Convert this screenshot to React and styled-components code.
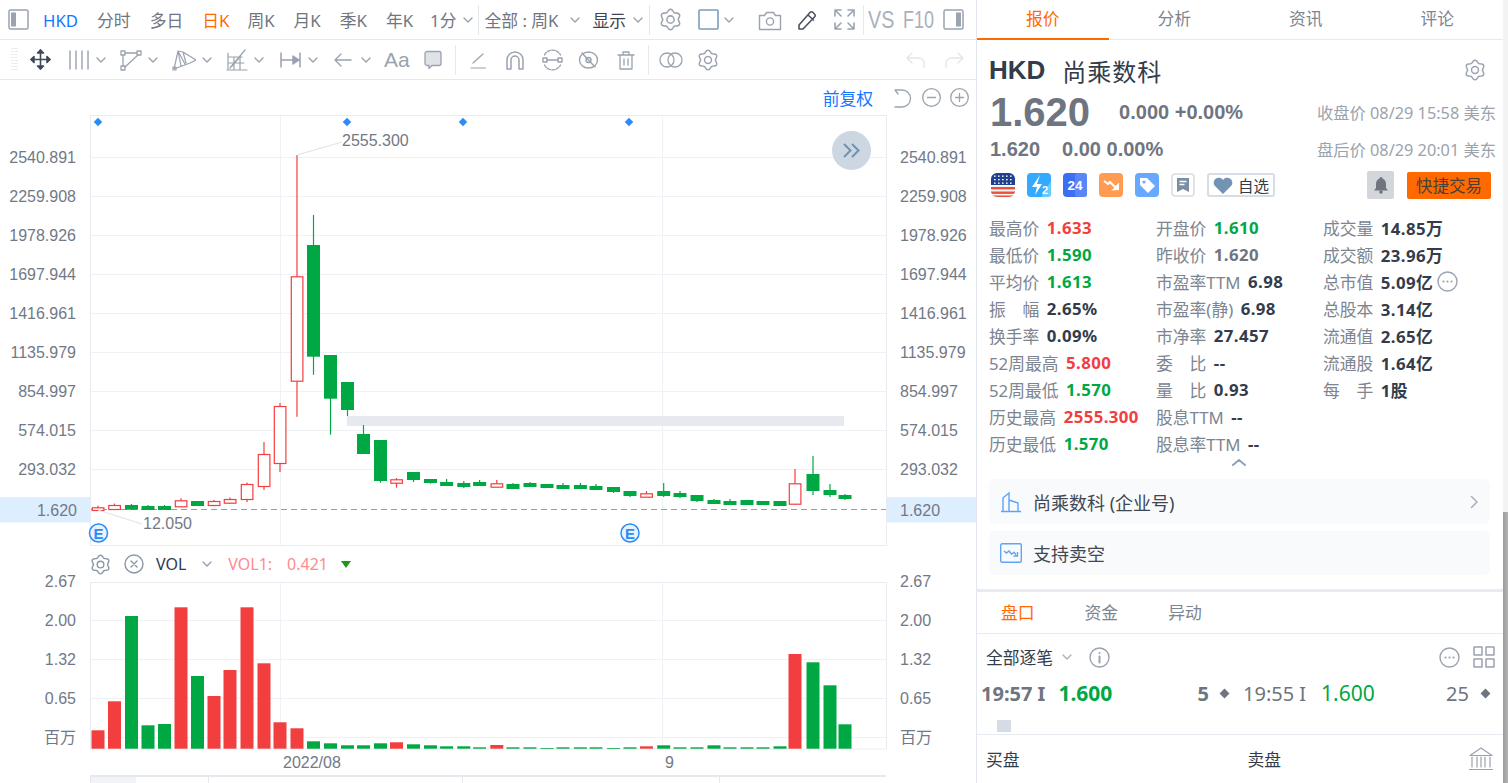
import React from "react";
import styled, { createGlobalStyle } from "styled-components";

const Global = createGlobalStyle`
  html, body { margin: 0; padding: 0; height: 783px; overflow: hidden; background: #fff; }
  body { font-family: "Noto Sans", "Noto Sans CJK SC", sans-serif; }
  * { box-sizing: border-box; }
`;

const ICON = "#9aa3af";
const GREEN = "#00a843";
const RED = "#f23e3e";
const TXT = "#333c4a";
const NUM = '"Liberation Sans", "Noto Sans CJK SC", sans-serif';

const Page = styled.div`display: flex; width: 1508px; height: 783px; overflow: hidden;`;
const Left = styled.div`width: 977px; height: 783px; border-right: 1px solid #e3e8f0; display: flex; flex-direction: column; flex: none; overflow: hidden;`;
const Right = styled.div`width: 526px; height: 783px; display: flex; flex-direction: column; flex: none; overflow: hidden;`;
const Scroll = styled.div`width: 5px; height: 783px; flex: none; background: #f3f3f3; display: flex; flex-direction: column; justify-content: flex-end;`;
const Thumb = styled.div`height: 271px; background: linear-gradient(90deg, #9c9c9c, #b4b4b4);`;

const Bar = styled.div`height: ${p => p.$h}px; display: flex; align-items: center; border-bottom: 1px solid #e4e8ef; flex: none; color: ${ICON};`;
const Item = styled.span`display: inline-flex; align-items: center; justify-content: center; flex: none; margin-left: ${p => p.$ml || 0}px; ${p => p.$w ? `width:${p.$w}px;` : ""} color: ${p => p.$c || "inherit"};`;
const Top = styled.span`flex: none; font-size: 16.8px; white-space: nowrap; margin-left: ${p => p.$ml || 0}px; padding-top: 2px; color: ${p => p.$c || "#6f7680"}; line-height: 22px;`;
const Sep = styled.span`flex: none; width: 1px; height: 30px; background: #e4e8ef; margin-left: ${p => p.$ml || 0}px;`;
const Faint = styled.span`flex: none; display: block; width: 7px; height: 24px; margin-left: ${p => p.$ml || 0}px; background: repeating-linear-gradient(180deg, #e9ecf1 0 1px, #fff 1px 3px);`;
const AaText = styled.span`flex: none; font-family: ${NUM}; font-size: 21px; color: ${ICON}; margin-left: ${p => p.$ml}px; width: 23px;`;
const Condensed = styled.span`flex: none; font-family: ${NUM}; font-size: 24px; color: #a9b1bc; display: inline-block; width: ${p => p.$w}px; margin-left: ${p => p.$ml}px; transform: scaleX(${p => p.$s}); transform-origin: left center; white-space: nowrap;`;
const Spacer = styled.span`flex: 1;`;

const ChartHead = styled.div`height: 35px; flex: none; display: flex; align-items: center; justify-content: flex-end; padding-right: 7px; color: ${ICON};`;
const Blue = styled.span`font-size: 16.8px; color: #1677ff; margin-right: 21px;`;
const Chart = styled.svg`display: block; flex: none;`;
const VolHead = styled.div`height: 26px; padding-top: 10px; flex: none; display: flex; align-items: center; padding-left: 90px; color: ${ICON};`;
const VolName = styled.span`font-size: 16px; color: ${p => p.$c}; margin-left: ${p => p.$ml}px; white-space: nowrap;`;
const Nav = styled.div`flex: 1; margin-left: 90px; width: 796px; border-top: 2px solid #e4e8ef; border-left: 1px solid #e4e8ef; display: flex;`;
const NavHandle = styled.div`height: 100%; width: ${p => p.$w}px; background: ${p => p.$bg || "transparent"}; border-right: ${p => p.$line ? "1px solid #e4e8ef" : "0"}; flex: none;`;

const Tabs = styled.div`height: 40px; flex: none; display: flex; border-bottom: 1px solid #e6eaf0;`;
const Tab = styled.div`width: 131.5px; height: 40px; display: flex; align-items: center; justify-content: center; font-size: 16.8px; padding-bottom: 2px; color: ${p => p.$on ? "#ff6a00" : "#7d8590"}; border-bottom: 2px solid ${p => p.$on ? "#ff6a00" : "transparent"};`;
const NameRow = styled.div`height: 40px; margin-top: 10px; padding: 0 17px 0 12px; display: flex; align-items: center; color: ${TXT}; flex: none;`;
const Sym = styled.span`font-family: ${NUM}; font-size: 26px; font-weight: 700; margin-right: 17px;`;
const Cn = styled.span`font-size: 24px; letter-spacing: 1px;`;
const PriceRow = styled.div`height: ${p => p.$h}px; padding: 0 7px 0 13px; display: flex; align-items: center; font-family: ${NUM}; font-weight: 700; color: #6e7580; font-size: 20px; white-space: nowrap; flex: none;`;
const Big = styled.span`font-size: 40px; margin-right: 29px;`;
const Small = styled.span`margin-right: 22px;`;
const When = styled.span`font-family: "Noto Sans", "Noto Sans CJK SC", sans-serif; margin-left: auto; font-weight: 400; font-size: 16.3px; color: #9ba3ad;`;
const BadgeRow = styled.div`height: 30px; margin-top: 6px; padding: 0 12px 0 14px; display: flex; align-items: center; flex: none; gap: 12px;`;
const Fav = styled.div`width: 68px; height: 24px; border: 2px solid #d7dde5; border-radius: 3px; display: flex; align-items: center; justify-content: center; gap: 5px; font-size: 15.5px; color: ${TXT};`;
const Bell = styled.div`width: 27px; height: 28px; background: #d3d6db; border-radius: 2px; display: flex; align-items: center; justify-content: center; margin-left: auto; margin-right: 1px;`;
const Trade = styled.div`width: 84px; height: 27px; background: #ff6a00; border-radius: 2px; display: flex; align-items: center; justify-content: center; font-size: 16.5px; color: #4b4034;`;

const Stats = styled.div`margin-top: 14px; padding-left: 12px; display: grid; grid-template-columns: 167px 167px 1fr; flex: none;`;
const StatCol = styled.div`display: flex; flex-direction: column;`;
const Stat = styled.div`height: 27px; display: flex; align-items: center; white-space: nowrap;`;
const StatL = styled.span`font-size: 16.8px; color: #7d8590; margin-right: 7.5px;`;
const StatV = styled.span`font-size: 16.8px; font-weight: 700; letter-spacing: .4px; color: ${p => p.$c || TXT};`;
const More = styled.span`display: inline-flex; margin-left: 4px; color: ${ICON};`;
const Collapse = styled.div`height: 22px; flex: none; display: flex; justify-content: center; padding-top: 1px; padding-right: 2px; color: #8fa3b8;`;
const Card = styled.div`height: ${p => p.$h}px; margin: 0 13px 7px 12px; flex: none; background: #f9fafb; border-radius: 6px; display: flex; align-items: center; padding: 0 11px; gap: 11px; font-size: 18px; color: #3f4753;`;
const Divider = styled.div`height: 3px; background: #e8ecf2; margin-top: 7px; flex: none;`;
const SubTabs = styled.div`height: 42px; padding-bottom: 2px; flex: none; border-bottom: 1px solid #e6eaf0; display: flex; padding-left: 24px; align-items: center; gap: 50px;`;
const SubTab = styled.span`font-size: 16.8px; color: ${p => p.$on ? "#ff6a00" : "#7d8590"};`;
const Filter = styled.div`height: 43px; padding: 3px 8px 0 9px; flex: none; display: flex; align-items: center; color: ${ICON};`;
const FilterT = styled.span`font-size: 16.8px; color: ${TXT}; margin-right: 9px;`;
const Trades = styled.div`height: 32px; flex: none; display: flex; align-items: center; font-size: 20px; white-space: nowrap; padding-left: 4px;`;
const TradeCell = styled.div`display: flex; align-items: center; width: ${p => p.$w}px; padding-right: ${p => p.$pr || 0}px; flex: none; font-weight: ${p => p.$b ? 700 : 400}; color: #6e7580;`;
const Price = styled.span`color: ${GREEN}; font-size: 21px; margin-left: ${p => p.$ml}px;`;
const Qty = styled.span`margin-left: auto; margin-right: ${p => p.$mr}px;`;
const Dia = styled.span`width: 7px; height: 7px; background: #6e7580; transform: rotate(45deg); flex: none;`;
const SquareRow = styled.div`height: 26px; flex: none; border-bottom: 1px solid #e6eaf0; padding-left: 20px; padding-top: 11px;`;
const Square = styled.div`width: 14px; height: 12px; background: #d5dce6;`;
const Book = styled.div`height: 47px; flex: none; display: flex; align-items: center; padding: 0 10px 0 9px; font-size: 16.8px; color: ${TXT};`;
const BookR = styled.span`margin-left: 228px;`;

const I = ({ w = 24, h = 24, vb, sw = 1.6, fill = "none", children, c = "currentColor" }) => (
  <svg width={w} height={h} viewBox={vb || `0 0 ${w} ${h}`} fill={fill} stroke={c} strokeWidth={sw} strokeLinecap="round" strokeLinejoin="round">{children}</svg>
);
const gear = (() => {
  let d = "";
  for (let i = 0; i <= 72; i++) {
    const t = (i / 72) * Math.PI * 2;
    const r = 9.4 + 1.3 * Math.cos(6 * t);
    d += (i ? "L" : "M") + (12 + r * Math.sin(t)).toFixed(2) + " " + (12 - r * Math.cos(t)).toFixed(2);
  }
  return d + "Z";
})();
const Gear = ({ s = 22 }) => <I w={s} h={s} vb="0 0 24 24" sw={1.6}><path d={gear} /><circle cx="12" cy="12" r="3.8" /></I>;
const Chev = ({ w = 10 }) => <I w={w} h={6} vb="0 0 10 6" sw={1.4}><path d="M1 1l4 4 4-4" /></I>;

const PanelIcon = ({ side }) => (
  <I w={21} h={21} sw={1.5}>
    <rect x="1" y="1" width="19" height="19" rx="1.5" />
    <rect x={side === "l" ? 3 : 13} y="3.5" width="5" height="14" fill="#9aa3af" stroke="none" />
  </I>
);

const Candles = [
  [98, 505.7, 510.5, 507.3, 510, 1], [114.5, 503.5, 509, 505, 509, 1], [131.5, 504, 510, 505, 509.7, 0], [148, 505, 510, 506, 510, 0],
  [164.5, 505, 510, 506, 510, 0], [181, 498.3, 506.3, 500.3, 506.3, 1], [197.5, 501, 506, 501, 506, 0], [214, 500, 506, 501, 505, 1],
  [230, 497.5, 504, 499, 502.7, 1], [247, 482.5, 502, 484, 499, 1], [264, 442, 490, 454, 486, 1], [280, 403, 472, 406, 463, 1],
  [297, 155, 416.7, 276.3, 380.7, 1], [313.5, 215, 374.7, 245, 356.7, 0], [330.5, 355, 434.7, 355, 398.7, 0], [347.5, 382, 416, 382, 410, 0],
  [363.5, 425, 454, 434, 454, 0], [380.5, 440, 482.7, 440, 481, 0], [396.5, 478, 487.7, 479.3, 482.7, 1], [413.5, 472, 482, 472, 480, 0],
  [430.5, 479, 483.7, 479, 483, 0], [446.6, 479, 486, 482, 486, 0], [463.8, 481, 488, 483, 487, 0], [479.6, 480, 486, 482, 486, 0],
  [496.8, 480, 486.7, 483.3, 486.7, 1], [513, 483, 489, 484, 489, 0], [530, 482, 487, 483, 487, 0], [547, 484, 488, 484, 488, 0],
  [563, 483, 489, 485, 489, 0], [580.4, 483, 489, 485, 489, 0], [596, 484, 490, 486, 490, 0], [613.5, 487, 493, 487, 492, 0],
  [630, 491, 497, 491, 496, 0], [646.5, 491, 496.7, 493.3, 496.7, 1], [663.7, 483, 497, 491, 496, 0], [680, 491, 498, 493, 497, 0],
  [697, 495, 502, 495, 501, 0], [714, 499, 504, 500, 504, 0], [730, 499, 505, 501, 505, 0], [747, 500, 505, 500, 505, 0],
  [763, 501, 505, 501, 505, 0], [780, 501, 506, 501, 506, 0], [795, 469, 503.7, 483.3, 503.7, 1], [813, 456, 495, 474, 491, 0],
  [830, 484, 497, 490, 495, 0], [845, 494, 500, 495, 499, 0],
];
const VolTop = [730.3, 701.3, 616, 725.3, 724, 607.3, 676, 696, 670, 607.3, 663.3, 722.3, 728.3, 741.3, 743.3, 745.3, 745.3, 743.3, 742.3, 744.3,
  745.3, 746.3, 746.3, 747.3, 745, 747.3, 747.3, 748, 747.3, 747.3, 747.3, 748, 747.3, 746.3, 745.3, 747.3, 747.3, 745.3, 747.3, 747.3, 747.3, 746.3, 654, 662.3, 685.3, 724.3];

const LEVELS = [[157, "2540.891"], [196, "2259.908"], [235, "1978.926"], [274, "1697.944"], [313, "1416.961"], [352, "1135.979"], [391, "854.997"], [430, "574.015"], [469, "293.032"]];
const VLEVELS = [[581, "2.67"], [620, "2.00"], [659, "1.32"], [698, "0.65"], [737, "百万"]];
const axis = { fontFamily: NUM, fontSize: 16, fill: "#717987" };

const EMark = ({ x }) => (
  <g>
    <circle cx={x} cy={533} r="9" fill="#e8f3ff" stroke="#2b8cf7" strokeWidth="1.5" />
    <text x={x} y={538.5} textAnchor="middle" fontFamily={NUM} fontSize="15" fontWeight="700" fill="#2b8cf7">E</text>
  </g>
);

const MainChart = () => (
  <Chart width="976" height="431" viewBox="0 115 976 431">
    <rect x="0" y="497" width="90" height="25.5" fill="#ddeeff" />
    <rect x="886" y="497" width="90" height="25.5" fill="#ddeeff" />
    <rect x="90.5" y="115.5" width="796" height="430" fill="#fff" stroke="#e8ecf2" />
    {LEVELS.map(([y]) => <line key={y} x1="91" x2="886" y1={y + .5} y2={y + .5} stroke="#eef1f5" />)}
    {[280.5, 662.5].map(x => <line key={x} x1={x} x2={x} y1="116" y2="545" stroke="#eef1f5" />)}
    <rect x="347" y="416" width="497" height="10" fill="#e6e9ee" />
    {[98, 347, 463, 629].map(x => <rect key={x} x={x - 3} y={119} width="6" height="6" fill="#2b8cf7" transform={`rotate(45 ${x} 122)`} />)}
    <line x1="91" x2="886" y1="509.5" y2="509.5" stroke="#e8893f" strokeWidth="1" strokeDasharray="6 4" />
    {Candles.map(([x, hi, lo, t, b, up], i) => (
      <g key={i}>
        <line x1={x} x2={x} y1={hi} y2={lo} stroke={up ? RED : GREEN} strokeWidth="1.2" />
        {up
          ? <rect x={x - 5.7} y={t + .5} width="11.6" height={b - t} fill="#fff" stroke={RED} strokeWidth="1.2" />
          : <rect x={x - 6.5} y={t} width="13" height={b - t} fill={GREEN} />}
      </g>
    ))}
    <polyline points="297,155 342,142" fill="none" stroke="#dde3ec" />
    <polyline points="98,510 142,524" fill="none" stroke="#dde3ec" />
    <text x="342" y="145.5" {...axis}>2555.300</text>
    <text x="143" y="528.5" {...axis}>12.050</text>
    {LEVELS.map(([y, t]) => <text key={y} x="76" y={y + 5.5} textAnchor="end" {...axis}>{t}</text>)}
    {LEVELS.map(([y, t]) => <text key={y} x="900" y={y + 5.5} {...axis}>{t}</text>)}
    <text x="77" y="515.5" textAnchor="end" {...axis}>1.620</text>
    <text x="900" y="515.5" {...axis}>1.620</text>
    <EMark x={98.5} />
    <EMark x={630} />
    <circle cx="851.5" cy="150.5" r="19.5" fill="#cdd7e2" />
    <path d="M844 144l6.5 6.5L844 157M852 144l6.5 6.5L852 157" fill="none" stroke="#6e92b8" strokeWidth="2" />
  </Chart>
);

const VolChart = () => (
  <Chart width="976" height="203" viewBox="0 572 976 203">
    <rect x="90.5" y="582.5" width="796" height="166.5" fill="#fff" stroke="#e8ecf2" />
    {[620, 659, 698, 737].map(y => <line key={y} x1="91" x2="886" y1={y + .5} y2={y + .5} stroke="#eef1f5" />)}
    {[280.5, 662.5].map(x => <line key={x} x1={x} x2={x} y1="583" y2="749" stroke="#eef1f5" />)}
    {VolTop.map((t, i) => {
      const c = Candles[i];
      return <rect key={i} x={c[0] - 6.5} y={t} width="13" height={Math.max(748.7 - t, .8)} fill={c[5] ? RED : GREEN} />;
    })}
    {VLEVELS.map(([y, t]) => <text key={y} x="76" y={y + 5.5} textAnchor="end" {...axis}>{t}</text>)}
    {VLEVELS.map(([y, t]) => <text key={y} x="900" y={y + 5.5} {...axis}>{t}</text>)}
    <text x="283" y="768" {...axis}>2022/08</text>
    <text x="665" y="768" {...axis}>9</text>
  </Chart>
);

const ToolbarOne = () => (
  <Bar $h={40}>
    <Item $ml={8} $w={21}><PanelIcon side="l" /></Item>
    <Top $ml={14} $c="#1677ff">HKD</Top>
    <Top $ml={19}>分时</Top>
    <Top $ml={19}>多日</Top>
    <Top $ml={19} $c="#ff6a00">日K</Top>
    <Top $ml={18}>周K</Top>
    <Top $ml={19}>月K</Top>
    <Top $ml={19}>季K</Top>
    <Top $ml={19}>年K</Top>
    <Top $ml={17}>1分</Top>
    <Item $ml={7} $w={10}><Chev /></Item>
    <Sep $ml={5} />
    <Top $ml={5}>全部 : 周K</Top>
    <Item $ml={12} $w={10}><Chev /></Item>
    <Top $ml={12} $c="#3c4450">显示</Top>
    <Item $ml={7} $w={10}><Chev /></Item>
    <Sep $ml={6} />
    <Item $ml={9} $w={23}><Gear s={23} /></Item>
    <Item $ml={16} $w={21}><I w={21} h={21} c="#7f9cbc" sw={1.6}><rect x="1" y="1" width="19" height="19" rx="1" /></I></Item>
    <Item $ml={5} $w={10}><Chev /></Item>
    <Item $ml={24} $w={24}><I w={24} h={22} sw={1.4}><path d="M1.5 6.5h5l2-3h7l2 3h5v14h-21z" /><circle cx="12" cy="12.5" r="3.6" /></I></Item>
    <Item $ml={15} $w={20} $c="#4a525e"><I w={20} h={22} sw={1.6}><path d="M2 16L13 3.5a2 2 0 0 1 3 0l1.5 1.5a2 2 0 0 1 0 3L6 20H2zM11 6l5.5 5" /></I></Item>
    <Item $ml={17} $w={21}><I w={21} h={21} sw={1.6}><path d="M1 7V1h6M14 1h6v6M1 14v6h6M20 14v6h-6M2 2l5 5M19 2l-5 5M2 19l5-5M19 19l-5-5" /></I></Item>
    <Sep $ml={8} />
    <Condensed $ml={4} $w={31} $s={.82}>VS</Condensed>
    <Condensed $ml={4} $w={37} $s={.75}>F10</Condensed>
    <Item $ml={3} $w={21}><PanelIcon side="r" /></Item>
  </Bar>
);

const ToolbarTwo = () => (
  <Bar $h={40}>
    <Faint $ml={11} />
    <Item $ml={11} $w={23} $c="#3f4a58"><I w={23} h={23} sw={1.6} fill="#3f4a58"><path d="M11.5 2v19M2 11.5h19" /><path d="M8.5 5l3-3 3 3zM8.5 18l3 3 3-3zM5 8.5l-3 3 3 3zM18 8.5l3 3-3 3z" /></I></Item>
    <Item $ml={16} $w={22}><I w={22} h={20} sw={1.4}><path d="M2 1v18M8 1v18M14 1v18M20 1v18" /></I></Item>
    <Item $ml={6} $w={10}><Chev /></Item>
    <Item $ml={14} $w={22}><I w={22} h={22} sw={1.3}><rect x="1" y="2" width="4" height="4" /><rect x="17" y="2" width="4" height="4" /><rect x="1" y="17" width="4" height="4" /><path d="M5 4h12M3 6v11M18 6L5 18" /></I></Item>
    <Item $ml={6} $w={10}><Chev /></Item>
    <Item $ml={14} $w={24}><I w={24} h={22} sw={1.2}><path d="M2 20L6 2l5 1 13 8-6 3-16 6zM6 2l3 15M6 2l7 13M11 3l3 11" /><rect x="1" y="18" width="3" height="3" /></I></Item>
    <Item $ml={6} $w={10}><Chev /></Item>
    <Item $ml={14} $w={22}><I w={22} h={22} sw={1.2}><path d="M1 21h20M2 4v17M2 8h14M2 14h16M8 8v13M14 8v13M4 19L19 1" /><path d="M6 17l8-9" strokeDasharray="2 2" /></I></Item>
    <Item $ml={6} $w={10}><Chev /></Item>
    <Item $ml={16} $w={21}><I w={21} h={18} sw={1.5} fill="#9aa3af"><path d="M1 2v14M20 2v14M1 9h18" /><path d="M13 5l6 4-6 4z" /></I></Item>
    <Item $ml={7} $w={10}><Chev /></Item>
    <Item $ml={15} $w={19}><I w={19} h={16} sw={1.4}><path d="M18 8H2M8 2L2 8l6 6" /></I></Item>
    <Item $ml={9} $w={10}><Chev /></Item>
    <AaText $ml={13}>Aa</AaText>
    <Item $ml={17} $w={18}><I w={18} h={20} sw={1.3} fill="#dfe3e8"><path d="M3 1.5h12a2 2 0 0 1 2 2v10a2 2 0 0 1-2 2H8l-3 3v-3H3a2 2 0 0 1-2-2v-10a2 2 0 0 1 2-2z" /></I></Item>
    <Sep $ml={13} />
    <Item $ml={14} $w={16}><I w={16} h={18} sw={1.2}><path d="M1 17h15M3 12L13 3" /></I></Item>
    <Item $ml={19} $w={20}><I w={20} h={20} sw={1.5}><path d="M2 19V10a8 8 0 0 1 16 0v9h-4v-9a4 4 0 0 0-8 0v9z" /></I></Item>
    <Item $ml={17} $w={21}><I w={21} h={22} sw={1.4}><path d="M2.500 6a9 9 0 0 1 16 0M2.500 16a9 9 0 0 0 16 0" strokeDasharray="3 1.500" /><rect x="1" y="9" width="4" height="4" /><rect x="16" y="9" width="4" height="4" /><path d="M5 11h11" /></I></Item>
    <Item $ml={15} $w={21}><I w={21} h={20} sw={1.4}><ellipse cx="10.5" cy="10" rx="9" ry="8" /><path d="M4 3l13 14" /><circle cx="10.5" cy="10" r="2.5" /></I></Item>
    <Item $ml={18} $w={18}><I w={18} h={20} sw={1.3}><path d="M1 5h16M6 5V2h6v3M3 5v14h12V5M7 9v6M11 9v6" /></I></Item>
    <Sep $ml={13} />
    <Item $ml={10} $w={24}><I w={24} h={16} sw={1.3}><circle cx="8" cy="8" r="7" /><circle cx="16" cy="8" r="7" /></I></Item>
    <Item $ml={14} $w={22}><Gear s={22} /></Item>
    <Spacer />
    <Item $w={21} $c="#e4e7ec"><I w={21} h={18} sw={1.5}><path d="M7 2L2 7l5 5M2 7h12a5 5 0 0 1 5 5v4" /></I></Item>
    <Item $ml={18} $w={21} $c="#e4e7ec"><I w={21} h={18} sw={1.5}><path d="M14 2l5 5-5 5M19 7H7a5 5 0 0 0-5 5v4" /></I></Item>
    <Item $ml={11} />
  </Bar>
);

const LEFT = [
  ["最高价", "1.633", RED], ["最低价", "1.590", GREEN], ["平均价", "1.613", GREEN], ["振　幅", "2.65%"], ["换手率", "0.09%"],
  ["52周最高", "5.800", RED], ["52周最低", "1.570", GREEN], ["历史最高", "2555.300", RED], ["历史最低", "1.570", GREEN],
];
const MID = [
  ["开盘价", "1.610", GREEN], ["昨收价", "1.620", "#6e7580"], ["市盈率TTM", "6.98"], ["市盈率(静)", "6.98"], ["市净率", "27.457"],
  ["委　比", "--"], ["量　比", "0.93"], ["股息TTM", "--"], ["股息率TTM", "--"],
];
const RIGHT = [
  ["成交量", "14.85万"], ["成交额", "23.96万"], ["总市值", "5.09亿", null, true], ["总股本", "3.14亿"], ["流通值", "2.65亿"], ["流通股", "1.64亿"], ["每　手", "1股"],
];

const Dots = ({ s = 21 }) => <I w={s} h={s} vb="0 0 21 21" sw={1.4}><circle cx="10.5" cy="10.5" r="9.5" /><path d="M6.5 10.5h.01M10.5 10.5h.01M14.5 10.5h.01" strokeWidth="2.2" /></I>;

const StatColumn = ({ rows }) => (
  <StatCol>
    {rows.map(([l, v, c, more]) => (
      <Stat key={l}>
        <StatL>{l}</StatL><StatV $c={c}>{v}</StatV>
        {more && <More><Dots /></More>}
      </Stat>
    ))}
  </StatCol>
);

const Tile = ({ bg, children }) => (
  <svg width="24" height="24" viewBox="0 0 24 24"><rect width="24" height="24" rx="4" fill={bg} />{children}</svg>
);

const Badges = () => (
  <BadgeRow>
    <svg width="24" height="24" viewBox="0 0 24 24">
      <defs><clipPath id="fl"><rect width="24" height="24" rx="6" /></clipPath></defs>
      <g clipPath="url(#fl)">
        <rect width="24" height="24" fill="#f4f4f4" />
        {[14, 18.5, 22.5].map(y => <rect key={y} y={y} width="24" height="2.4" fill="#e8503f" />)}
        <rect width="24" height="12" fill="#1f3f8f" />
        <rect y="12" width="24" height="0.8" fill="#fff" />
        {[2.5, 6, 9.5].map(y => [3, 7, 11, 15, 19].map(x => <rect key={x + "-" + y} x={x} y={y} width="1.6" height="1.3" fill="#fff" />))}
      </g>
    </svg>
    <Tile bg="#35a8ff">
      <path d="M14 24L24 8v13a3 3 0 0 1-3 3z" fill="#62ccff" />
      <path d="M13 2L5 14h5l-2 8 7-11h-5z" fill="#fff" />
      <text x="18" y="21" textAnchor="middle" fontFamily={NUM} fontSize="11" fontWeight="700" fill="#fff">2</text>
    </Tile>
    <Tile bg="#3d6ff5">
      <rect x="12" width="12" height="24" rx="3" fill="#5b86f7" />
      <text x="12" y="17" textAnchor="middle" fontFamily={NUM} fontSize="13.5" fontWeight="700" fill="#fff">24</text>
    </Tile>
    <Tile bg="#ff9c52">
      <path d="M5 8l4 3 2-2 5 5 1-1M19 16l-4 .3L19 12z" fill="none" stroke="#fff" strokeWidth="2" />
    </Tile>
    <Tile bg="#68a8ff">
      <path d="M5 5h7l8 8-7 7-8-8z" fill="#fff" />
      <circle cx="9" cy="9" r="1.6" fill="#68a8ff" />
    </Tile>
    <svg width="24" height="24" viewBox="0 0 24 24">
      <rect x="1" y="1" width="22" height="22" rx="3" fill="#fff" stroke="#d7dde5" strokeWidth="1.5" />
      <path d="M6 5h12v14l-6-3-6 3z" fill="#7a8ea6" />
      <path d="M8.5 8.5h7M8.5 11.5h5" stroke="#fff" strokeWidth="1.5" />
    </svg>
    <Fav>
      <svg width="20" height="17" viewBox="0 0 20 17"><path d="M10 17L1.5 8.5A5 5 0 0 1 10 3a5 5 0 0 1 8.5 5.5z" fill="#7393b5" /></svg>
      自选
    </Fav>
    <Bell>
      <svg width="16" height="18" viewBox="0 0 16 18"><path d="M8 1a1.5 1.5 0 0 1 1.5 1.5C12 3.5 13 5.5 13 8v4l2 2.5H1L3 12V8c0-2.5 1-4.5 3.5-5.5A1.5 1.5 0 0 1 8 1z" fill="#6f757e" /><circle cx="8" cy="16" r="1.8" fill="#6f757e" /></svg>
    </Bell>
    <Trade>快捷交易</Trade>
  </BadgeRow>
);

export default function App() {
  return (
    <Page>
      <Global />
      <Left>
        <ToolbarOne />
        <ToolbarTwo />
        <ChartHead>
          <Blue>前复权</Blue>
          <Item $w={20}><I w={20} h={20} sw={1.3}><path d="M1 2h7a8.5 8.5 0 0 1 0 17H1M1 2l3 4" /></I></Item>
          <Item $ml={8} $w={19}><I w={19} h={19} sw={1.3}><circle cx="9.5" cy="9.5" r="8.8" /><path d="M5.5 9.5h8" /></I></Item>
          <Item $ml={9} $w={19}><I w={19} h={19} sw={1.3}><circle cx="9.5" cy="9.5" r="8.8" /><path d="M5.5 9.5h8M9.5 5.5v8" /></I></Item>
        </ChartHead>
        <MainChart />
        <VolHead>
          <Item $w={21} $c="#8a97a8"><Gear s={21} /></Item>
          <Item $ml={13} $w={20} $c="#8a97a8"><I w={20} h={20} sw={1.4}><circle cx="10" cy="10" r="9" /><path d="M7 7l6 6M13 7l-6 6" /></I></Item>
          <VolName $ml={12} $c="#2f3a4a">VOL</VolName>
          <Item $ml={15} $w={12} $c="#8fa3b8"><Chev w={12} /></Item>
          <VolName $ml={15} $c="#ff8a8f">VOL1:</VolName>
          <VolName $ml={15} $c="#ff8a8f">0.421</VolName>
          <Item $ml={13} $w={10}><svg width="10" height="7" viewBox="0 0 10 7"><path d="M0 0h10L5 7z" fill="#1c9a16" /></svg></Item>
        </VolHead>
        <VolChart />
        <Nav>
          <NavHandle $w={45} $bg="#f1f3f6" />
          <NavHandle $w={73} $line />
          <NavHandle $w={254} $line />
          <NavHandle $w={257} $line />
        </Nav>
      </Left>
      <Right>
        <Tabs>
          <Tab $on>报价</Tab><Tab>分析</Tab><Tab>资讯</Tab><Tab>评论</Tab>
        </Tabs>
        <NameRow>
          <Sym>HKD</Sym><Cn>尚乘数科</Cn>
          <Spacer />
          <Item $c="#9aa3af"><Gear s={22} /></Item>
        </NameRow>
        <PriceRow $h={44}>
          <Big>1.620</Big>
          <span>0.000 +0.00%</span>
          <When>收盘价 08/29 15:58 美东</When>
        </PriceRow>
        <PriceRow $h={30}>
          <Small>1.620</Small>
          <span>0.00 0.00%</span>
          <When>盘后价 08/29 20:01 美东</When>
        </PriceRow>
        <Badges />
        <Stats>
          <StatColumn rows={LEFT} />
          <StatColumn rows={MID} />
          <StatColumn rows={RIGHT} />
        </Stats>
        <Collapse><I w={16} h={8} vb="0 0 16 8" sw={2}><path d="M2 7l6-5 6 5" /></I></Collapse>
        <Card $h={45}>
          <svg width="22" height="22" viewBox="0 0 22 22" fill="none" stroke="#5ea5f5" strokeWidth="1.4"><path d="M1 20.5h20M3 20V7l6-5v18M9 9l9 3v8" /></svg>
          <span>尚乘数科 (企业号)</span>
          <Spacer />
          <Item $c="#a9b1bc"><I w={9} h={14} sw={1.6}><path d="M1.5 1.5L7 7l-5.5 5.5" /></I></Item>
        </Card>
        <Card $h={44}>
          <svg width="22" height="20" viewBox="0 0 22 20" fill="none" stroke="#5ea5f5" strokeWidth="1.4"><rect x=".7" y=".7" width="20.6" height="18.6" rx="1.5" /><path d="M4 8l2.5 2L9 8l2.5 3L14 9.5l3 3M17.5 9v4h-4" /></svg>
          <span>支持卖空</span>
        </Card>
        <Divider />
        <SubTabs>
          <SubTab $on>盘口</SubTab><SubTab>资金</SubTab><SubTab>异动</SubTab>
        </SubTabs>
        <Filter>
          <FilterT>全部逐笔</FilterT>
          <Item $c="#a9b1bc"><Chev /></Item>
          <Item $ml={17}><I w={21} h={21} sw={1.4}><circle cx="10.5" cy="10.5" r="9.5" /><path d="M10.5 9.5v6M10.5 6h.01" strokeWidth="2" /></I></Item>
          <Spacer />
          <Item><Dots /></Item>
          <Item $ml={13}><I w={22} h={22} sw={1.5}><rect x="1" y="1" width="8" height="8" /><rect x="13" y="1" width="8" height="8" /><rect x="1" y="13" width="8" height="8" /><rect x="13" y="13" width="8" height="8" /></I></Item>
        </Filter>
        <Trades>
          <TradeCell $b $w={262} $pr={15}>19:57 I<Price $ml={13}>1.600</Price><Qty $mr={12}>5</Qty><Dia /></TradeCell>
          <TradeCell $w={246}>19:55 I<Price $ml={15}>1.600</Price><Qty $mr={13}>25</Qty><Dia /></TradeCell>
        </Trades>
        <SquareRow><Square /></SquareRow>
        <Book>
          买盘<BookR>卖盘</BookR>
          <Spacer />
          <Item $c="#9aa3af"><I w={24} h={24} sw={1.2}><path d="M1 8.5L12 1l11 7.5zM3 10v10M8 10v10M12 10v10M16 10v10M21 10v10M0.5 22.5h23" /></I></Item>
        </Book>
      </Right>
      <Scroll><Thumb /></Scroll>
    </Page>
  );
}
